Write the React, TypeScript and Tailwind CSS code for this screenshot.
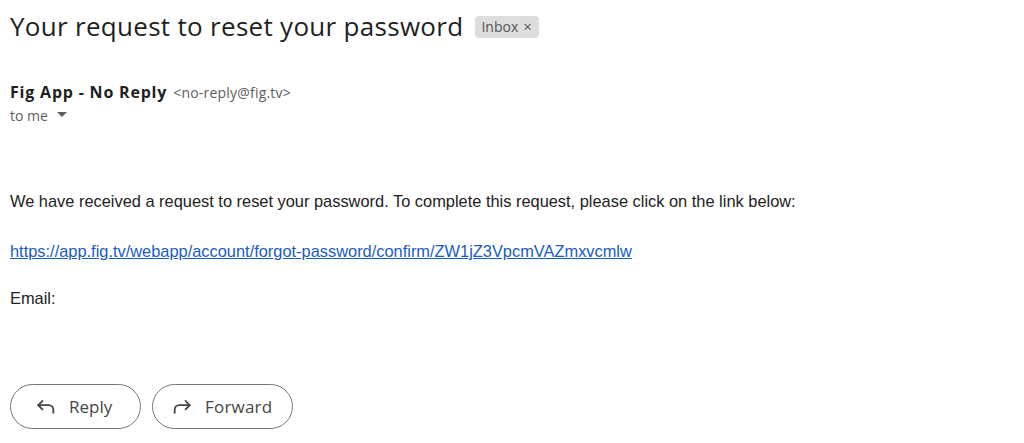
import React from 'react';

const ReplyIcon = () => (
  <svg width="22" height="22" viewBox="0 0 24 24" fill="none" stroke="currentColor" strokeWidth="2" strokeLinecap="square">
    <path d="M8 5.5 3.5 10 8 14.5" />
    <path d="M4 10h11a5 5 0 0 1 5 5v3" />
  </svg>
);

const ForwardIcon = () => (
  <svg width="22" height="22" viewBox="0 0 24 24" fill="none" stroke="currentColor" strokeWidth="2" strokeLinecap="square">
    <path d="M16 5.5l4.5 4.5-4.5 4.5" />
    <path d="M20 10H9a5 5 0 0 0-5 5v3" />
  </svg>
);

const App: React.FC = () => {
  return (
    <div className="w-[1024px] h-[443px] bg-white overflow-hidden font-['Open_Sans',sans-serif] text-[#1f1f1f]">
      {/* Subject */}
      <div className="flex items-center pl-[10px] pt-[8px] h-[44px]">
        <h1 className="text-[26px] leading-[36px] font-normal tracking-[0.3px]">Your request to reset your password</h1>
        <span className="ml-[12px] mt-[1px] flex items-center gap-[5px] bg-[#dddddd] rounded-[4px] pl-[6px] pr-[7px] h-[22px] text-[14px] text-[#555555]">
          Inbox <span className="text-[15px] leading-none">×</span>
        </span>
      </div>

      {/* Sender */}
      <div className="pl-[10px] mt-[36px]">
        <div className="flex items-baseline gap-[6px] h-[24px]">
          <span className="text-[16px] font-bold tracking-[0.8px] text-[#1f1f1f]">Fig App - No Reply</span>
          <span className="text-[14px] tracking-[0.2px] text-[#5e5e5e]">&lt;no-reply@fig.tv&gt;</span>
        </div>
        <div className="flex items-center gap-[9px] text-[14px] text-[#5e5e5e] h-[24px] mt-[-1px]">
          to me
          <svg width="10" height="6" viewBox="0 0 10 6">
            <path d="M0 0h10L5 5z" fill="#5e5e5e" />
          </svg>
        </div>
      </div>

      {/* Body */}
      <div className="pl-[10px] mt-[62px] font-['Liberation_Sans',Arial,sans-serif] text-[16.4px] text-[#222222]">
        <p className="leading-[24px]">We have received a request to reset your password. To complete this request, please click on the link below:</p>
        <p className="leading-[24px] mt-[26px]">
          <a href="#" className="text-[#1a5bc4] underline">https://app.fig.tv/webapp/account/forgot-password/confirm/ZW1jZ3VpcmVAZmxvcmlw</a>
        </p>
        <p className="leading-[24px] mt-[23px]">Email:</p>
      </div>

      {/* Actions */}
      <div className="flex gap-[11px] pl-[10px] mt-[74px]">
        <button className="flex items-center gap-[12px] h-[45px] w-[131px] pl-[24px] border border-[#747775] rounded-full text-[17px] text-[#444746] font-medium">
          <ReplyIcon />
          Reply
        </button>
        <button className="flex items-center gap-[12px] h-[45px] w-[141px] pl-[18px] border border-[#747775] rounded-full text-[17px] tracking-[0.2px] text-[#444746] font-medium">
          <ForwardIcon />
          Forward
        </button>
      </div>
    </div>
  );
};

export default App;
